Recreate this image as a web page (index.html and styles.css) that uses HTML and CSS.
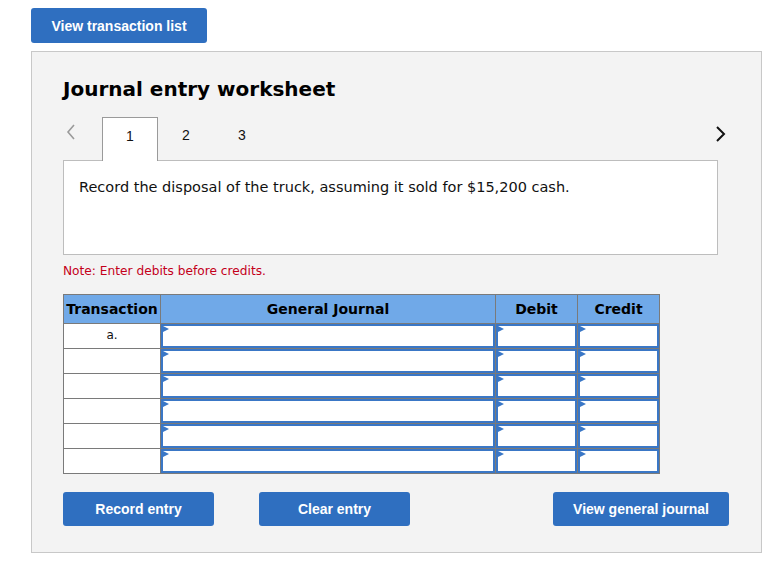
FILE: index.html
```html
<!DOCTYPE html>
<html lang="en">
<head>
    <meta charset="UTF-8">
    <meta name="viewport" content="width=device-width, initial-scale=1.0">
    <title>Journal entry worksheet</title>
    <link rel="stylesheet" href="styles.css">
</head>
<body>
    <button type="button" class="btn btn-top">View transaction list</button>

    <div class="panel">
        <h2>Journal entry worksheet</h2>

        <div class="tabs">
            <span class="chev chev-prev">
                <svg width="10" height="16" viewBox="0 0 10 16"><polyline points="8,1 2,8 8,15" fill="none" stroke="#9a9a9a" stroke-width="1.6"/></svg>
            </span>
            <span class="tab active">1</span>
            <span class="tab">2</span>
            <span class="tab">3</span>
            <span class="chev chev-next">
                <svg width="11" height="16" viewBox="0 0 11 16"><polyline points="2,1 9,8 2,15" fill="none" stroke="#111" stroke-width="2"/></svg>
            </span>
        </div>

        <div class="question">
            Record the disposal of the truck, assuming it sold for $15,200 cash.
        </div>

        <p class="note">Note: Enter debits before credits.</p>

        <table class="journal">
            <tr>
                <th class="col-trans">Transaction</th>
                <th class="col-account">General Journal</th>
                <th class="col-amt">Debit</th>
                <th class="col-amt">Credit</th>
            </tr>
            <tr>
                <td class="trans">a.</td>
                <td class="cell"><span class="mark"></span><input type="text"></td>
                <td class="cell"><span class="mark"></span><input type="text"></td>
                <td class="cell"><span class="mark"></span><input type="text"></td>
            </tr>
            <tr>
                <td class="trans"></td>
                <td class="cell"><span class="mark"></span><input type="text"></td>
                <td class="cell"><span class="mark"></span><input type="text"></td>
                <td class="cell"><span class="mark"></span><input type="text"></td>
            </tr>
            <tr>
                <td class="trans"></td>
                <td class="cell"><span class="mark"></span><input type="text"></td>
                <td class="cell"><span class="mark"></span><input type="text"></td>
                <td class="cell"><span class="mark"></span><input type="text"></td>
            </tr>
            <tr>
                <td class="trans"></td>
                <td class="cell"><span class="mark"></span><input type="text"></td>
                <td class="cell"><span class="mark"></span><input type="text"></td>
                <td class="cell"><span class="mark"></span><input type="text"></td>
            </tr>
            <tr>
                <td class="trans"></td>
                <td class="cell"><span class="mark"></span><input type="text"></td>
                <td class="cell"><span class="mark"></span><input type="text"></td>
                <td class="cell"><span class="mark"></span><input type="text"></td>
            </tr>
            <tr>
                <td class="trans"></td>
                <td class="cell"><span class="mark"></span><input type="text"></td>
                <td class="cell"><span class="mark"></span><input type="text"></td>
                <td class="cell"><span class="mark"></span><input type="text"></td>
            </tr>
        </table>

        <div class="actions">
            <button type="button" class="btn btn-record">Record entry</button>
            <button type="button" class="btn btn-clear">Clear entry</button>
            <button type="button" class="btn btn-view">View general journal</button>
        </div>
    </div>
</body>
</html>
```

FILE: styles.css
```css
body {
    margin: 0;
    padding: 8px 0 0 31px;
    background-color: #fff;
    font-family: "DejaVu Sans", Verdana, sans-serif;
    color: #111;
}
.btn {
    display: block;
    flex-shrink: 0;
    height: 35px;
    padding: 0;
    border: none;
    border-radius: 3px;
    background-color: #2f6fc0;
    color: #fff;
    font-family: "Liberation Sans", Arial, sans-serif;
    font-size: 14px;
    font-weight: bold;
    cursor: pointer;
}
.btn-top {
    width: 176px;
    margin-bottom: 8px;
}
.panel {
    box-sizing: border-box;
    width: 731px;
    height: 502px;
    padding: 25px 43px 0 31px;
    background-color: #f3f3f3;
    border: 1px solid #c8c8c8;
}
h2 {
    margin: 0;
    font-size: 20px;
    line-height: 24px;
    font-weight: bold;
    color: #000;
}
.tabs {
    display: flex;
    align-items: stretch;
    height: 44px;
    margin-top: 16px;
    margin-bottom: -1px;
}
.chev {
    display: block;
}
.chev svg {
    display: block;
}
.chev-prev {
    width: 39px;
    padding: 7px 0 0 3px;
    box-sizing: border-box;
}
.chev-next {
    margin-left: auto;
    margin-right: -8px;
    padding-top: 9px;
}
.tab {
    width: 56px;
    box-sizing: border-box;
    padding-top: 10px;
    text-align: center;
    font-family: "Liberation Sans", Arial, sans-serif;
    font-size: 14px;
    color: #111;
}
.tab.active {
    background-color: #fff;
    border: 1px solid #9a9a9a;
    border-bottom: none;
    position: relative;
    z-index: 1;
}
.question {
    box-sizing: border-box;
    height: 95px;
    padding: 17px 15px;
    background-color: #fff;
    border: 1px solid #bdbdbd;
    font-size: 14.5px;
    line-height: 18px;
}
.note {
    margin: 8px 0 0;
    font-size: 12.2px;
    line-height: 16px;
    color: #c4001a;
}
.journal {
    margin-top: 15px;
    border-collapse: collapse;
    width: 597px;
}
.journal th {
    height: 28px;
    padding: 0;
    background-color: #70a9e8;
    border: 1px solid #7a7a7a;
    font-size: 14px;
    font-weight: bold;
    color: #000;
}
.col-trans {
    width: 96px;
}
.col-account {
    width: 334px;
}
.col-amt {
    width: 81px;
}
.journal td {
    height: 24px;
    padding: 0;
    border: 1px solid #7a7a7a;
    background-color: #fff;
}
.journal td.trans {
    height: 20px;
    padding-top: 4px;
    vertical-align: top;
    text-align: center;
    font-size: 12px;
}
.cell {
    position: relative;
}
.cell input {
    display: block;
    box-sizing: border-box;
    width: 100%;
    height: 24px;
    margin: 0;
    padding: 0 6px;
    border: 2px solid #3a77c6;
    background-color: #fff;
    font-size: 12px;
}
.mark {
    position: absolute;
    top: 2px;
    left: 2px;
    width: 0;
    height: 0;
    border-top: 3px solid transparent;
    border-bottom: 3px solid transparent;
    border-left: 6px solid #3a77c6;
}
.actions {
    display: flex;
    margin-top: 18px;
}
.btn-record,
.btn-clear {
    width: 151px;
    height: 34px;
}
.btn-clear {
    margin-left: 45px;
}
.btn-view {
    width: 176px;
    height: 34px;
    margin-left: 143px;
}
```
